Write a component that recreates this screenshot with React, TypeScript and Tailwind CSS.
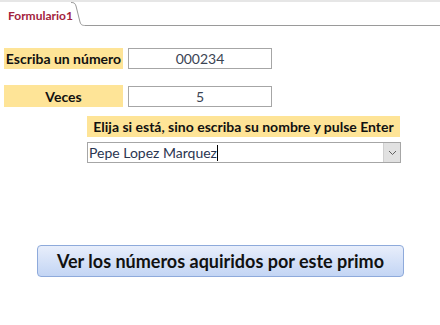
export default function App() {
  return (
    <div className="w-[440px] h-[325px] bg-white overflow-hidden font-['Lato','Liberation_Sans',sans-serif]">
      {/* Tab strip */}
      <div className="h-[2px] bg-[#e6e6e6]" />
      <div className="flex h-[24px]">
        <div className="w-[71px] pl-[8px] pt-[8px] text-[12px] font-bold leading-none text-[#a3233d] whitespace-nowrap">
          Formulario1
        </div>
        <svg width="15" height="24" viewBox="0 0 15 24" className="shrink-0">
          <path d="M0 0.5 C3 0.5 4 1 5 4 L9 20 C10 23 11 23.5 15 23.5" fill="none" stroke="#9a9a9a" strokeWidth="1" />
        </svg>
        <div className="flex-1 border-b border-[#9a9a9a]" />
      </div>

      {/* Form */}
      <div className="flex flex-col">
        <div className="mt-[22px] flex items-center gap-[5px] pl-[4px]">
          <div className="w-[119px] h-[21px] bg-[#fee497] flex items-center justify-center text-[14px] font-bold text-[#111]">
            Escriba un número
          </div>
          <div className="w-[144px] h-[21px] border border-[#a6a6a6] flex items-center justify-center text-[14px] text-[#3b4453]">
            000234
          </div>
        </div>

        <div className="mt-[16px] flex items-center gap-[5px] pl-[4px]">
          <div className="w-[119px] h-[22px] bg-[#fee497] flex items-center justify-center text-[14px] font-bold text-[#111]">
            Veces
          </div>
          <div className="w-[144px] h-[21px] border border-[#a6a6a6] flex items-center justify-center text-[14px] text-[#3b4453]">
            5
          </div>
        </div>

        <div className="mt-[9px] ml-[87px] w-[313px] h-[21px] bg-[#fee497] flex items-center justify-center text-[14px] font-bold text-[#111]">
          Elija si está, sino escriba su nombre y pulse Enter
        </div>

        <div className="mt-[5px] ml-[87px] w-[314px] h-[21px] border border-[#a6a6a6] flex items-stretch">
          <div className="flex-1 flex items-center pl-[1px] text-[14px] text-[#2a3550]">
            Pepe Lopez Marquez
            <span className="inline-block w-[1px] h-[16px] bg-black" />
          </div>
          <div className="w-[17px] bg-[#e1e1e1] border-l border-[#d0d0d0] flex items-center justify-center">
            <svg width="9" height="6" viewBox="0 0 9 6">
              <path d="M1 1 L4.5 4.5 L8 1" fill="none" stroke="#606060" strokeWidth="1" />
            </svg>
          </div>
        </div>

        <button className="mt-[82px] ml-[37px] w-[367px] h-[32px] rounded-[4px] border border-[#8eaadb] bg-gradient-to-b from-[#e8eefb] to-[#c3d5f4] text-[18px] font-bold text-[#111] flex items-center justify-center">
          Ver los números aquiridos por este primo
        </button>
      </div>
    </div>
  );
}
